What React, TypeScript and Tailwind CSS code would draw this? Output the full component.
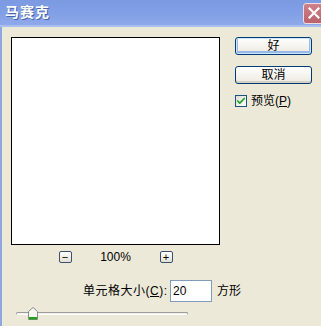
import { Check } from 'lucide-react';

function XpButton({ label, isDefault }: { label: string; isDefault?: boolean }) {
  return (
    <button
      className={`flex h-[18px] w-[77px] items-center justify-center rounded-[3px] border border-[#003c74] bg-gradient-to-b from-[#ffffff] to-[#ece9de] text-[12px] leading-none text-black ${
        isDefault ? 'shadow-[inset_0_0_0_1px_#cee7ff,inset_0_-1px_0_2px_#98b8ea]' : 'shadow-[inset_0_-2px_0_#d6d0c5]'
      }`}
    >
      {label}
    </button>
  );
}

function ZoomButton({ sign }: { sign: string }) {
  return (
    <div className="flex h-[12px] w-[13px] items-center justify-center rounded-[2px] border border-[#3c4f6e] bg-gradient-to-b from-white to-[#e3e0d3] text-[11px] leading-none text-black">
      {sign}
    </div>
  );
}

export default function App() {
  return (
    <div
      className="flex h-[326px] w-[321px] flex-col overflow-hidden bg-[#ece9d8] text-[12px] text-black"
      style={{ fontFamily: "Tahoma, 'Liberation Sans', 'Noto Sans CJK SC', sans-serif" }}
    >
      {/* Title bar */}
      <div className="flex h-[27px] shrink-0 items-center justify-between border-b-2 border-[#a9bff0] bg-gradient-to-b from-[#7c9ae2] via-[#809fe6] to-[#8fa9ea] pl-[5px]">
        <span className="text-[14px] font-bold tracking-[1px] text-white [text-shadow:1px_1px_0_#4a63a8]">马赛克</span>
        <div className="mt-[1px] flex h-[21px] w-[21px] -mr-[3px] items-center justify-center rounded-[3px] border border-[#f2dcdf] bg-gradient-to-b from-[#cf8088] to-[#b9636c]">
          <svg width="12" height="12" viewBox="0 0 12 12">
            <path d="M1.5 1.5 L10.5 10.5 M10.5 1.5 L1.5 10.5" stroke="white" strokeWidth="2.2" strokeLinecap="square" />
          </svg>
        </div>
      </div>

      {/* Body */}
      <div className="flex flex-1 flex-col border-l-2 border-[#8ea6e2] pl-[9px] pt-[10px]">
        <div className="flex">
          <div className="flex w-[209px] flex-col">
            <div className="h-[208px] w-[209px] border border-black bg-white" />
            <div className="mt-[6px] flex items-center justify-center gap-[28px]">
              <ZoomButton sign="−" />
              <span className="w-[32px] text-center leading-[12px]">100%</span>
              <ZoomButton sign="+" />
            </div>
          </div>

          <div className="ml-[15px] flex flex-col">
            <XpButton label="好" isDefault />
            <div className="mt-[11px]">
              <XpButton label="取消" />
            </div>
            <label className="mt-[8px] flex items-center gap-[4px]">
              <span className="flex h-[12px] w-[12px] items-center justify-center border border-[#1c5180] bg-gradient-to-br from-[#dcdcd6] to-white">
                <Check className="h-[10px] w-[10px] text-[#21a121]" strokeWidth={4} />
              </span>
              <span>
                预览(<span className="underline">P</span>)
              </span>
            </label>
          </div>
        </div>

        <div className="mt-[17px] flex items-center pl-[72px]">
          <span className="w-[86px] tracking-[0.5px]">
            单元格大小(<span className="underline">C</span>):
          </span>
          <div className="ml-[1px] flex h-[22px] w-[42px] items-center border border-[#7f9db9] bg-white pl-[2px]">20</div>
          <span className="ml-[5px]">方形</span>
        </div>

        <div className="relative ml-[5px] mt-[5px] h-[13px] w-[172px]">
          <div className="absolute left-0 right-0 top-[5px] h-[3px] rounded-full border border-[#9d9c99] border-b-white bg-[#f3f2ec]" />
          <svg className="absolute left-[12px] top-0" width="10" height="13" viewBox="0 0 10 13">
            <path d="M0.5 4.5 L5 0.5 L9.5 4.5 L9.5 12.5 L0.5 12.5 Z" fill="#f6f6f2" stroke="#8c8c86" />
            <rect x="1" y="10" width="8" height="2.5" fill="#21a121" />
          </svg>
        </div>
      </div>
    </div>
  );
}
